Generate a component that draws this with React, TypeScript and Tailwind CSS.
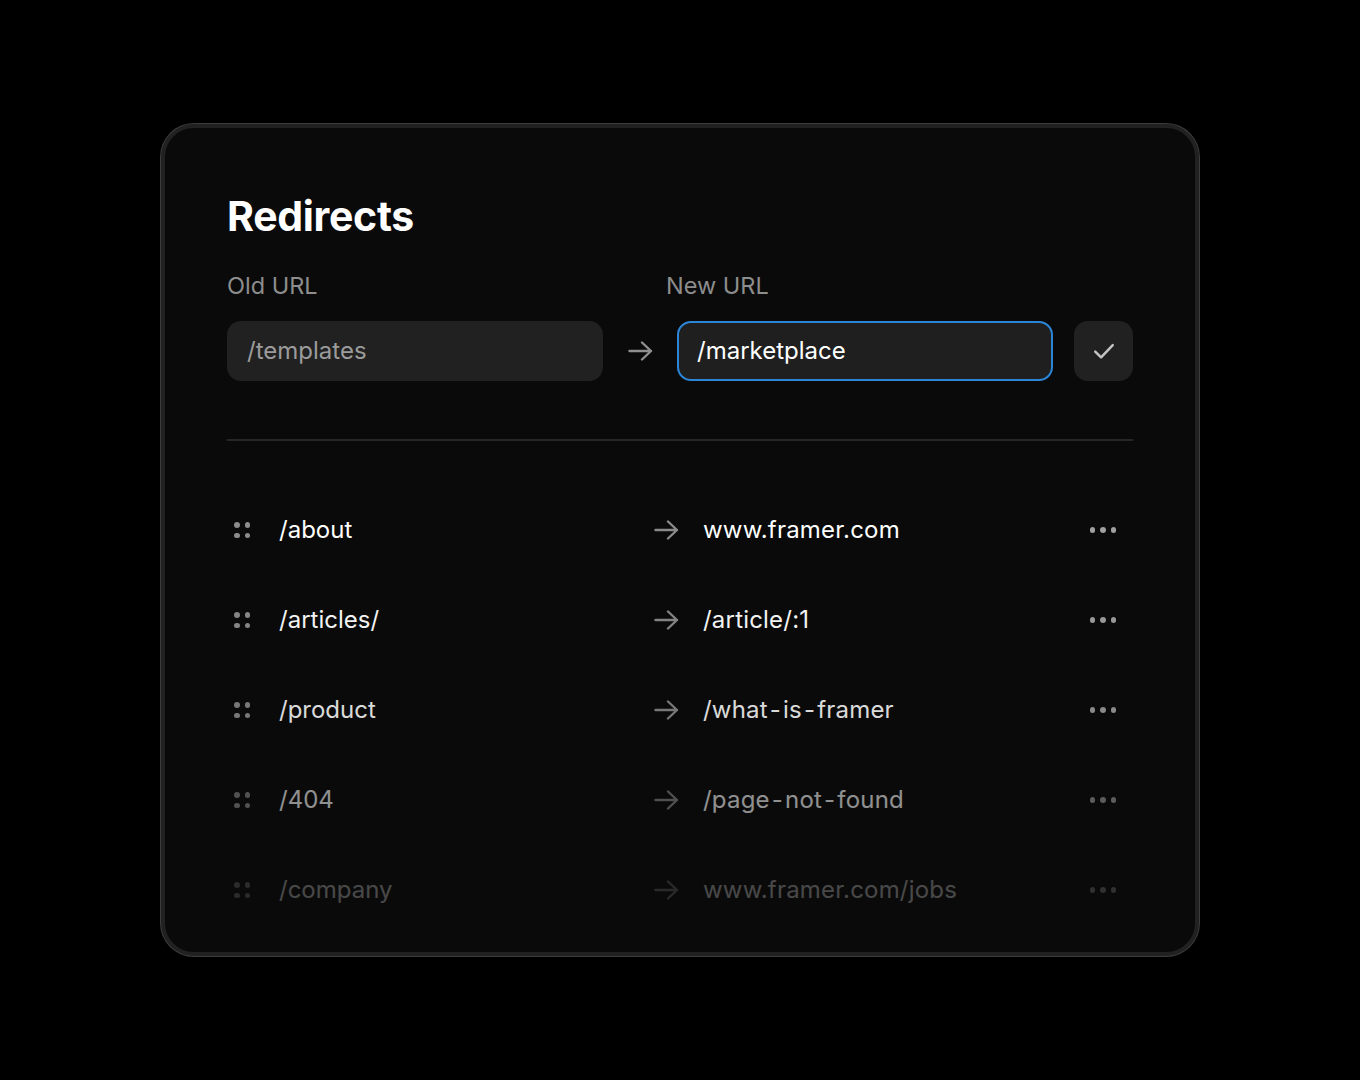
import React from 'react';

interface Redirect {
  from: string;
  to: string;
  fade: string;
}

const redirects: Redirect[] = [
  { from: '/about', to: 'www.framer.com', fade: 'opacity-100' },
  { from: '/articles/', to: '/article/:1', fade: 'opacity-95' },
  { from: '/product', to: '/what-is-framer', fade: 'opacity-85' },
  { from: '/404', to: '/page-not-found', fade: 'opacity-55' },
  { from: '/company', to: 'www.framer.com/jobs', fade: 'opacity-25' },
];

const Arrow = ({ className }: { className?: string }) => (
  <svg width="25" height="20" viewBox="0 0 25 20" fill="none" className={className}>
    <path d="M1.5 10H23M14 1.5L23 10L14 18.5" stroke="currentColor" strokeWidth="2.4" strokeLinecap="round" strokeLinejoin="round" />
  </svg>
);

const Handle = () => (
  <div className="grid grid-cols-2 gap-x-[5px] gap-y-[5px] w-[16px]">
    <span className="w-[5.5px] h-[5.5px] rounded-full bg-[#8c8c8c]" />
    <span className="w-[5.5px] h-[5.5px] rounded-full bg-[#8c8c8c]" />
    <span className="w-[5.5px] h-[5.5px] rounded-full bg-[#8c8c8c]" />
    <span className="w-[5.5px] h-[5.5px] rounded-full bg-[#8c8c8c]" />
  </div>
);

const MoreDots = () => (
  <div className="flex items-center gap-[5px]">
    <span className="w-[5.5px] h-[5.5px] rounded-full bg-[#a0a0a0]" />
    <span className="w-[5.5px] h-[5.5px] rounded-full bg-[#a0a0a0]" />
    <span className="w-[5.5px] h-[5.5px] rounded-full bg-[#a0a0a0]" />
  </div>
);

// hyphens in the reference sit with extra room around them
const Slug = ({ text }: { text: string }) => {
  const parts = text.split('-');
  return (
    <>
      {parts.map((p, i) => (
        <React.Fragment key={i}>
          {i > 0 && <span className="mx-[2px]">-</span>}
          {p}
        </React.Fragment>
      ))}
    </>
  );
};

const RedirectRow = ({ item }: { item: Redirect }) => (
  <div className={`flex items-center h-[90px] ${item.fade}`}>
    <div className="w-[52px] pl-[7px]">
      <Handle />
    </div>
    <div className="w-[375px] text-[24px] text-white">{item.from}</div>
    <Arrow className="text-[#8a8a8a]" />
    <div className="ml-[24px] flex-1 text-[24px] text-white tracking-[0.2px]">
      <Slug text={item.to} />
    </div>
    <div className="w-[60px] flex justify-center">
      <MoreDots />
    </div>
  </div>
);

export default function App() {
  return (
    <div
      className="min-h-screen h-[1080px] bg-black flex items-center justify-center"
      style={{ fontFamily: 'Inter, "Noto Sans", sans-serif' }}
    >
      <div className="w-[1038px] h-[832px] rounded-[33px] border-[4px] border-[#212121] shadow-[0_0_0_1px_#3c3c3c] bg-[#0a0a0a] px-[62px] pt-[64px] overflow-hidden">
        <h1 className="text-[41px] leading-[48px] font-bold text-white tracking-[-0.3px]">Redirects</h1>

        <div className="flex mt-[32px] h-[28px] items-center text-[23.5px] text-[#8d8d8d]">
          <span className="w-[439px]">Old URL</span>
          <span>New URL</span>
        </div>

        <div className="flex items-center mt-[21px]">
          <div className="w-[376px] h-[60px] rounded-[14px] bg-[#212121] flex items-center px-[20px] text-[24px] text-[#9b9b9b]">
            /templates
          </div>
          <div className="w-[74px] flex justify-center">
            <Arrow className="text-[#8f8f8f]" />
          </div>
          <div className="w-[376px] h-[60px] rounded-[14px] bg-[#1f1f1f] border-2 border-[#2c86d8] flex items-center px-[18px] text-[24px] text-white">
            /marketplace
          </div>
          <button className="ml-[21px] w-[59px] h-[60px] rounded-[14px] bg-[#212121] flex items-center justify-center text-[#c4c4c4]">
            <svg width="28" height="28" viewBox="0 0 24 24" fill="none">
              <path d="M4.5 12.5L9.5 17.5L19.5 7" stroke="currentColor" strokeWidth="2.1" strokeLinecap="round" strokeLinejoin="round" />
            </svg>
          </button>
        </div>

        <div className="mt-[58px] h-[2px] bg-[#262626]" />

        <div className="mt-[44px]">
          {redirects.map((r) => (
            <RedirectRow key={r.from} item={r} />
          ))}
        </div>
      </div>
    </div>
  );
}
